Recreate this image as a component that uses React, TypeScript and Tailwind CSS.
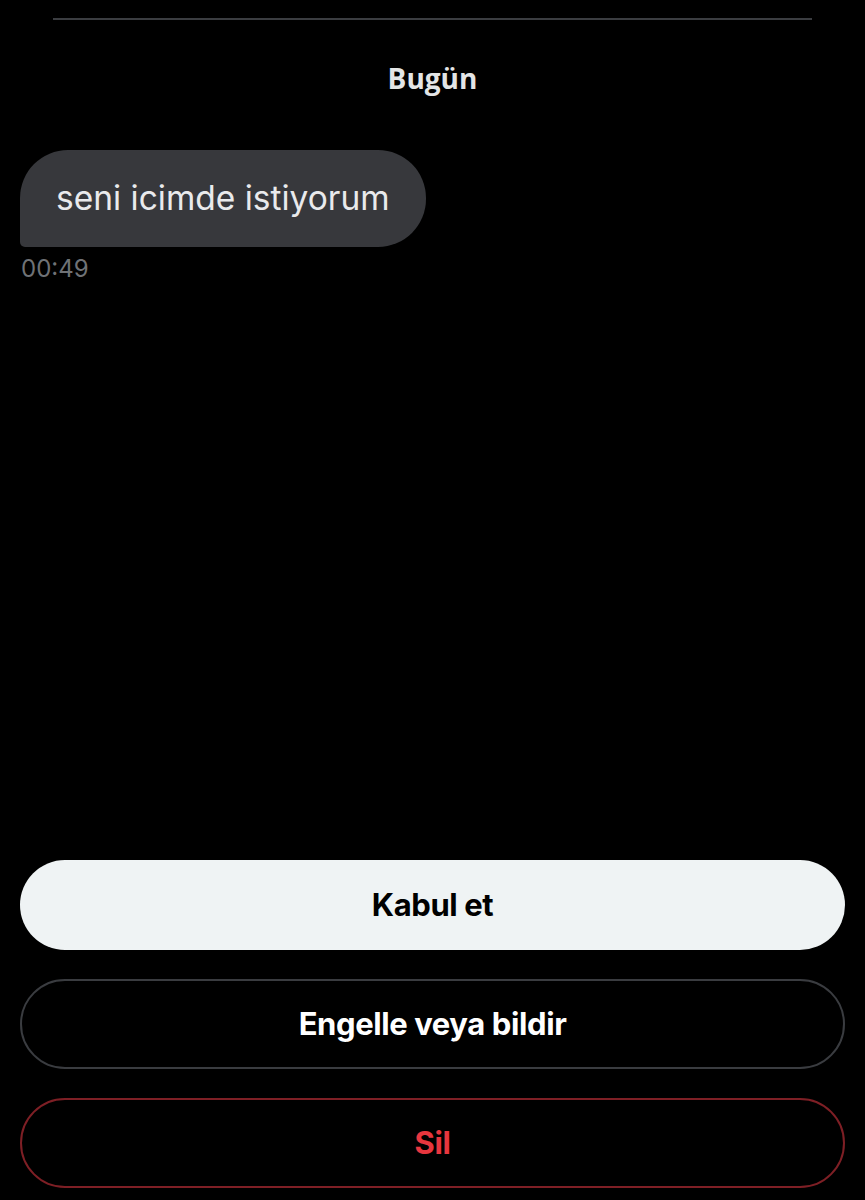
export default function App() {
  return (
    <div className="w-[865px] h-[1200px] bg-black flex flex-col font-['Inter','Noto_Sans',sans-serif] overflow-hidden">
      <div className="pt-[18px] px-[53px]">
        <div className="h-[2px] bg-[#3b3d41]" />
      </div>
      <div className="mt-[40px] text-center text-[28px] leading-[36px] font-bold text-[#e3e5e6] font-['Open_Sans',sans-serif]">
        Bugün
      </div>
      <div className="mt-[54px] px-[20px] flex flex-col items-start">
        <div className="h-[97px] w-[406px] bg-[#37383c] rounded-[48px] rounded-bl-[5px] flex items-center pl-[36px]">
          <span className="text-[33.5px] text-[#e9eaec]">
            seni icimde istiyorum
          </span>
        </div>
        <div className="mt-[7px] text-[24px] leading-[30px] text-[#6f7276] pl-[1px]">
          00:49
        </div>
      </div>
      <div className="flex-1" />
      <div className="px-[20px] pb-[12px] flex flex-col gap-[29px]">
        <button className="h-[90px] w-full rounded-full bg-[#eff3f4] text-black text-[31px] font-bold tracking-[-0.4px]">
          Kabul et
        </button>
        <button className="h-[90px] w-full rounded-full border-2 border-[#3a3c40] text-white text-[31px] font-bold tracking-[-0.4px]">
          Engelle veya bildir
        </button>
        <button className="h-[90px] w-full rounded-full border-2 border-[#7e1f25] text-[#e8363e] text-[31px] font-bold tracking-[-0.4px]">
          Sil
        </button>
      </div>
    </div>
  );
}
